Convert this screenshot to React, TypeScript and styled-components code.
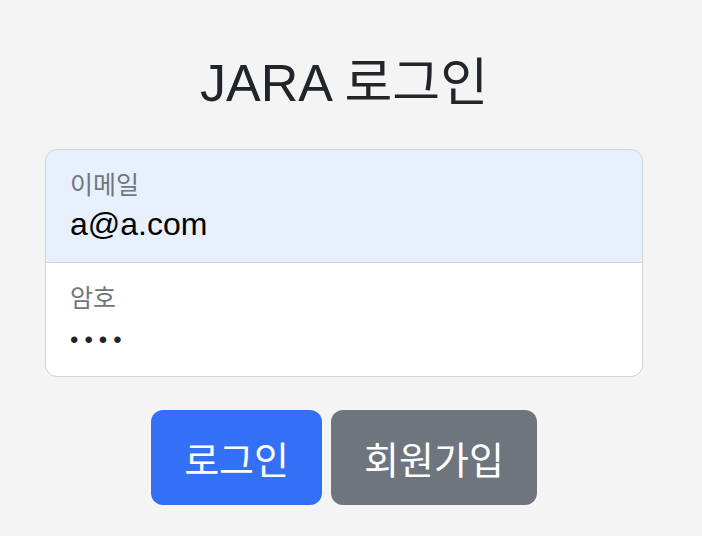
import React from "react";
import styled, { createGlobalStyle } from "styled-components";

const GlobalStyle = createGlobalStyle`
  html, body {
    margin: 0;
    padding: 0;
    background: #f4f4f4;
  }
  body {
    font-family: "Liberation Sans", "Noto Sans CJK KR", sans-serif;
    color: #212529;
  }
  * { box-sizing: border-box; }
`;

const Page = styled.main`
  min-height: 536px;
  padding: 52px 59px 0 45px;
`;

const Title = styled.h3`
  margin: 0 0 35px;
  font-size: 52px;
  font-weight: 400;
  line-height: 1.2;
  text-align: center;
  color: #212529;
`;

const Fields = styled.div`
  display: flex;
  flex-direction: column;
`;

const Field = styled.label<{ $autofill?: boolean; $first?: boolean }>`
  display: flex;
  flex-direction: column;
  height: ${(p) => (p.$first ? "114px" : "115px")};
  padding: 16px 24px 0;
  background: ${(p) => (p.$autofill ? "#e8f0fe" : "#ffffff")};
  border: 1px solid #ced4da;
  border-radius: ${(p) => (p.$first ? "12px 12px 0 0" : "0 0 12px 12px")};
  margin-top: ${(p) => (p.$first ? "0" : "-1px")};
`;

const FieldLabel = styled.span`
  font-family: "Noto Sans CJK KR", sans-serif;
  font-size: 25px;
  line-height: 34px;
  color: #71767c;
`;

const Input = styled.input<{ $password?: boolean }>`
  border: none;
  outline: none;
  background: transparent;
  padding: 0;
  margin: ${(p) => (p.$password ? "5px 0 0" : "2px 0 0")};
  font-family: "Liberation Sans", sans-serif;
  font-size: ${(p) => (p.$password ? "24px" : "32px")};
  line-height: 44px;
  height: 44px;
  color: ${(p) => (p.$password ? "#212529" : "#000000")};
  letter-spacing: ${(p) => (p.$password ? "6px" : "0")};
`;

const Actions = styled.div`
  display: flex;
  justify-content: center;
  gap: 9px;
  margin-top: 33px;
`;

const Button = styled.button<{ $variant: "primary" | "secondary" }>`
  height: 95px;
  padding: 0 33px;
  border: none;
  border-radius: 12px;
  font-family: "Noto Sans CJK KR", sans-serif;
  font-size: 38px;
  color: #ffffff;
  background: ${(p) => (p.$variant === "primary" ? "#3370f5" : "#6e757d")};
  cursor: pointer;
`;

export default function App() {
  return (
    <>
      <GlobalStyle />
      <Page>
        <Title>JARA 로그인</Title>
        <Fields>
          <Field $first $autofill>
            <FieldLabel>이메일</FieldLabel>
            <Input type="email" value="a@a.com" readOnly />
          </Field>
          <Field>
            <FieldLabel>암호</FieldLabel>
            <Input type="password" $password value="1234" readOnly />
          </Field>
        </Fields>
        <Actions>
          <Button $variant="primary">로그인</Button>
          <Button $variant="secondary">회원가입</Button>
        </Actions>
      </Page>
    </>
  );
}
